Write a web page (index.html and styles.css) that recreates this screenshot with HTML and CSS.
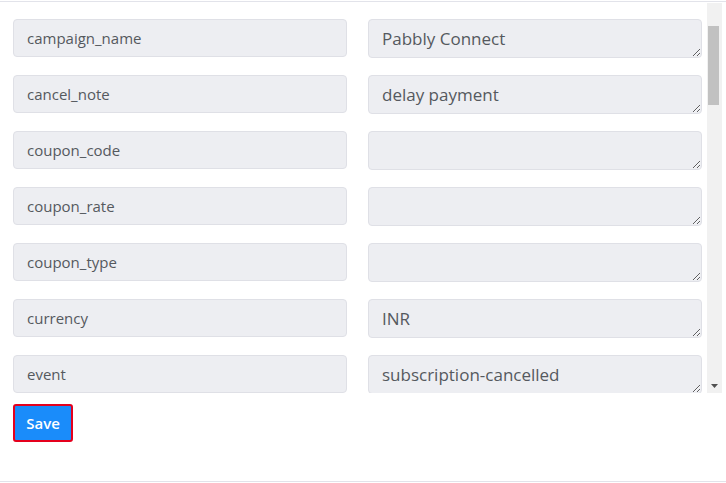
FILE: index.html
```html
<!DOCTYPE html>
<html>
<head>
<meta charset="utf-8">
<link rel="stylesheet" href="styles.css">
</head>
<body>
<div class="panel">
  <div class="viewport">
    <div class="scroller">
      <div class="fields">
        <div class="key">campaign_name</div>
        <textarea class="value" readonly>Pabbly Connect</textarea>
        <div class="key">cancel_note</div>
        <textarea class="value" readonly>delay payment</textarea>
        <div class="key">coupon_code</div>
        <textarea class="value" readonly></textarea>
        <div class="key">coupon_rate</div>
        <textarea class="value" readonly></textarea>
        <div class="key">coupon_type</div>
        <textarea class="value" readonly></textarea>
        <div class="key">currency</div>
        <textarea class="value" readonly>INR</textarea>
        <div class="key">event</div>
        <textarea class="value" readonly>subscription-cancelled</textarea>
      </div>
    </div>
    <div class="scrollbar">
      <div class="sb-btn"></div>
      <div class="sb-track"><div class="sb-thumb"></div></div>
      <div class="sb-btn">
        <svg width="15" height="15" viewBox="0 0 15 15"><path d="M4 6h7l-3.5 4z" fill="#505050"/></svg>
      </div>
    </div>
  </div>
  <div class="footer">
    <button class="save">Save</button>
  </div>
</div>
</body>
</html>
```

FILE: styles.css
```css
html, body {
  margin: 0;
  padding: 0;
  background: #fff;
}
body {
  font-family: "Open Sans", "Noto Sans", sans-serif;
  color: #55595e;
}
.panel {
  box-sizing: border-box;
  margin-top: 1px;
  height: 481px;
  border-top: 1px solid #e2e3ea;
  border-bottom: 1px solid #e2e3ea;
  display: flex;
  flex-direction: column;
  padding-top: 1px;
}
.viewport {
  display: flex;
  height: 390px;
  flex: none;
}
.scroller {
  width: 707px;
  overflow: hidden;
}
.scrollbar {
  width: 15px;
  background: #f1f1f1;
  display: flex;
  flex-direction: column;
}
.sb-btn {
  height: 15px;
  flex: none;
}
.sb-btn svg {
  display: block;
}
.sb-track {
  flex: 1;
  padding-top: 8px;
}
.sb-thumb {
  height: 79px;
  margin-left: 1px;
  width: 11px;
  background: #c1c1c1;
}
.fields {
  display: grid;
  grid-template-columns: 334px 334px;
  column-gap: 21px;
  row-gap: 18px;
  grid-auto-rows: 38px;
  padding: 16px 5px 0 13px;
}
.key {
  box-sizing: border-box;
  background: #edeef2;
  border: 1px solid #dfe0e6;
  border-radius: 4px;
  display: flex;
  align-items: center;
  padding: 0 13px;
  font-size: 15px;
  color: #55595e;
}
.value {
  box-sizing: border-box;
  margin: 0;
  width: 334px;
  height: 39px;
  background: #edeef2;
  border: 1px solid #dfe0e6;
  border-radius: 4px;
  padding: 7px 13px;
  font-family: "Open Sans", "Noto Sans", sans-serif;
  font-size: 17px;
  line-height: 23px;
  color: #55595e;
  overflow: hidden;
  outline: none;
}
.footer {
  padding: 11px 13px;
}
.save {
  box-sizing: border-box;
  width: 60px;
  height: 38px;
  background: #1a8cfa;
  border: 2px solid #e5001d;
  border-radius: 3px;
  color: #fff;
  font-family: "Open Sans", "Noto Sans", sans-serif;
  font-weight: 600;
  font-size: 15px;
  padding: 0;
}
```
